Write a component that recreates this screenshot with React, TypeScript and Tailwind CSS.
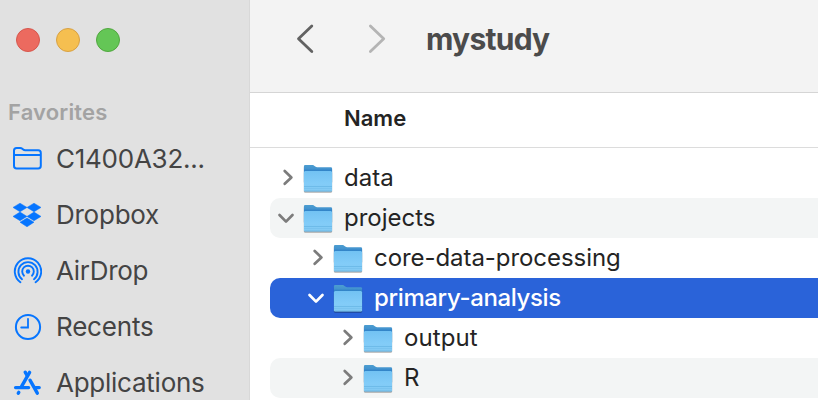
import type { ReactNode } from "react";

function FolderOutline() {
  return (
    <svg width="32" height="28" viewBox="0 0 32 28" fill="none" stroke="#0675ff" strokeWidth="2">
      <path d="M4 20.8V5.6Q4 3 6.6 3H10.2Q11.4 3 12.3 3.8L13.2 4.6Q14 5.3 15.2 5.3H28.2Q30.8 5.3 30.8 7.9V20.8Q30.8 23.6 28.2 23.6H6.6Q4 23.6 4 20.8Z" />
      <path d="M4 10H30.8" />
    </svg>
  );
}

function DropboxIcon() {
  return (
    <svg width="32" height="28" viewBox="0 0 32 28" fill="#0675ff" stroke="#0675ff" strokeWidth="0.5">
      <path d="M10 2.2L17 6.4L10 10.8L3 6.4ZM24 2.2L31 6.4L24 10.8L17 6.4ZM10 11.1L17 15.4L10 19.7L3 15.4ZM24 11.1L31 15.4L24 19.7L17 15.4ZM17 17.1L24 21.2L17 25.8L10 21.2Z" />
    </svg>
  );
}

function AirDropIcon() {
  return (
    <svg width="32" height="28" viewBox="0 0 32 28" fill="none" stroke="#0675ff" strokeWidth="1.9" strokeLinecap="round">
      <path d="M10.4 25.2A13.2 13.2 0 1 1 25.6 25.2" />
      <path d="M12 22.2A9.6 9.6 0 1 1 24 22.2" />
      <path d="M14 18.7A5.8 5.8 0 1 1 22 18.7" />
      <circle cx="18" cy="14.5" r="2.2" fill="#0675ff" stroke="none" />
    </svg>
  );
}

function ClockIcon() {
  return (
    <svg width="32" height="28" viewBox="0 0 32 28" fill="none" stroke="#0675ff" strokeWidth="2" strokeLinecap="round">
      <circle cx="18" cy="14" r="12.1" />
      <path d="M18 5.8V14.5H11.2" strokeWidth="1.8" />
    </svg>
  );
}

function AppsIcon() {
  return (
    <svg width="32" height="28" viewBox="0 0 32 28" fill="none" stroke="#0675ff" strokeWidth="3.4" strokeLinecap="round">
      <path d="M19.6 3.4L11.6 17.4" />
      <path d="M15.2 3.2L16.8 6" />
      <path d="M5.6 18.6H18.6M25.6 18.6H29.2" />
      <path d="M20 11.2L27.3 24.2" />
      <path d="M8.8 23.4L8.3 24.2" />
    </svg>
  );
}

function BlueFolder() {
  return (
    <svg width="32" height="32" viewBox="0 0 32 32" className="shrink-0 drop-shadow-[0_1px_0.7px_rgba(0,0,0,0.35)]">
      <defs>
        <linearGradient id="folderBack" x1="0" y1="0" x2="0" y2="1">
          <stop offset="0" stopColor="#4c9dd0" />
          <stop offset="0.2" stopColor="#4494cf" />
          <stop offset="0.36" stopColor="#2d80c6" />
        </linearGradient>
        <linearGradient id="folderFront" x1="0" y1="0" x2="0" y2="1">
          <stop offset="0" stopColor="#72c2f3" />
          <stop offset="0.6" stopColor="#82ccf8" />
          <stop offset="1" stopColor="#83caf3" />
        </linearGradient>
      </defs>
      <path d="M1.9 4.4Q1.9 3.1 3.2 3.1H10.7Q11.7 3.1 12.5 3.9L13.3 4.6Q14.1 5.3 15.2 5.3H28.8Q30.1 5.3 30.1 6.6V20H1.9Z" fill="url(#folderBack)" />
      <path d="M1.9 10.6Q1.9 9.1 3.2 9.1H28.8Q30.1 9.1 30.1 10.6V28.2Q30.1 29.4 28.8 29.4H3.2Q1.9 29.4 1.9 28.2Z" fill="url(#folderFront)" />
      <path d="M2 24.5H30" stroke="#68b6e6" strokeWidth="0.8" />
      <path d="M2 26.5H30" stroke="#76c0ec" strokeWidth="0.7" />
      <path d="M2.5 29H29.5" stroke="#69b2dd" strokeWidth="0.7" />
    </svg>
  );
}

function Disclosure({ open, light }: { open: boolean; light: boolean }) {
  return (
    <svg width="32" height="40" viewBox="0 0 32 40" fill="none" stroke={light ? "#ffffff" : "#7c7c7c"} strokeWidth="2.7" strokeLinecap="round" strokeLinejoin="round" className="shrink-0">
      <path d={open ? "M9.5 17L16 23.6L22.5 17" : "M14.7 13L21.4 19.4L14.7 25.8"} />
    </svg>
  );
}

const places: { label: string; icon: ReactNode; spacing: string }[] = [
  { label: "C1400A32...", icon: <FolderOutline />, spacing: "tracking-[-0.25px]" },
  { label: "Dropbox", icon: <DropboxIcon />, spacing: "tracking-[-0.25px]" },
  { label: "AirDrop", icon: <AirDropIcon />, spacing: "tracking-[-0.3px]" },
  { label: "Recents", icon: <ClockIcon />, spacing: "tracking-[-0.2px]" },
  { label: "Applications", icon: <AppsIcon />, spacing: "tracking-[-0.25px]" },
];

const rows = [
  { name: "data", indent: "pl-0", open: false, look: "bg-white text-[#242424]", spacing: "tracking-[0px]" },
  { name: "projects", indent: "pl-0", open: true, look: "bg-[#f3f5f5] text-[#242424]", spacing: "tracking-[0px]" },
  { name: "core-data-processing", indent: "pl-[30px]", open: false, look: "bg-white text-[#242424]", spacing: "tracking-[-0.06px]" },
  { name: "primary-analysis", indent: "pl-[30px]", open: true, look: "bg-[#2a63d9] text-white font-medium", spacing: "tracking-[-0.36px]" },
  { name: "output", indent: "pl-[60px]", open: false, look: "bg-white text-[#242424]", spacing: "tracking-[0.1px]" },
  { name: "R", indent: "pl-[60px]", open: false, look: "bg-[#f3f5f5] text-[#242424]", spacing: "tracking-[0px]" },
];

export default function App() {
  return (
    <div className="flex h-[400px] w-[818px] overflow-hidden bg-white font-['Inter','Liberation_Sans',sans-serif]">
      <aside className="flex w-[250px] shrink-0 flex-col border-r border-[#d8d8d8] bg-[#e1e1e1]">
        <div className="flex gap-4 pt-7 pl-4">
          <span className="size-6 rounded-full border border-[#d6574d] bg-[#ec6a5f]" />
          <span className="size-6 rounded-full border border-[#d8a144] bg-[#f5bf50]" />
          <span className="size-6 rounded-full border border-[#51a73f] bg-[#64c656]" />
        </div>
        <h2 className="mt-[46px] pl-2 text-[22px] leading-7 font-semibold tracking-[0.15px] text-[#a3a3a3]">Favorites</h2>
        <nav className="mt-[5px] flex flex-col">
          {places.map((p) => (
            <a key={p.label} className="flex h-14 shrink-0 items-center pl-2.5">
              <span className="w-[46px] shrink-0">{p.icon}</span>
              <span className={`text-[26px] leading-8 whitespace-nowrap text-[#444444] ${p.spacing}`}>{p.label}</span>
            </a>
          ))}
        </nav>
      </aside>
      <main className="flex min-w-0 flex-1 flex-col">
        <header className="flex h-[93px] shrink-0 items-center border-b border-[#d5d5d5] bg-[#f3f3f3] pb-[14px] pl-[43px]">
          <svg width="100" height="32" viewBox="0 0 100 32" fill="none" strokeWidth="2.8" strokeLinecap="round" strokeLinejoin="round">
            <path d="M18.8 3L5.5 15.8L18.8 28.6" stroke="#626262" />
            <path d="M77.4 3L90.7 15.8L77.4 28.6" stroke="#b4b4b4" />
          </svg>
          <h1 className="pl-[33px] text-[30px] leading-9 font-bold tracking-[-0.75px] text-[#4b4b4b]">mystudy</h1>
        </header>
        <div className="flex h-[55px] shrink-0 items-center border-b border-[#dcdcdc] pb-[3px] pl-[94px] text-[22px] font-semibold text-[#242424]">Name</div>
        <div className="mt-2.5 ml-5 flex flex-col">
          {rows.map((r) => (
            <div key={r.name} className={`flex h-10 shrink-0 items-center rounded-l-[10px] text-[24px] leading-8 whitespace-nowrap ${r.look} ${r.indent}`}>
              <Disclosure open={r.open} light={r.name === "primary-analysis"} />
              <BlueFolder />
              <span className={`pl-2.5 ${r.spacing}`}>{r.name}</span>
            </div>
          ))}
        </div>
      </main>
    </div>
  );
}
